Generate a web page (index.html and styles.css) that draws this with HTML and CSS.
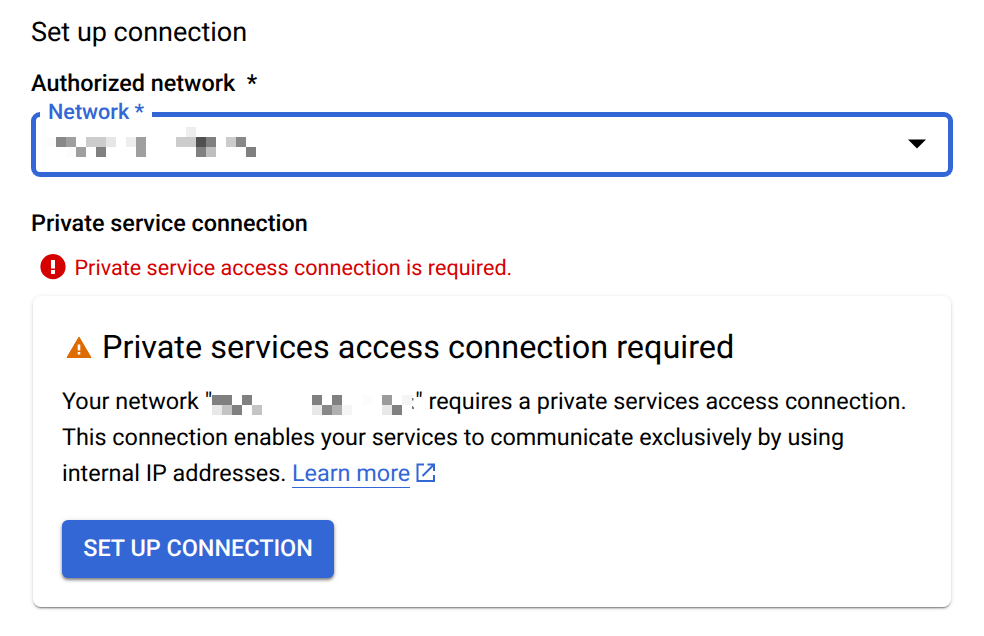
FILE: index.html
```html
<!DOCTYPE html>
<html lang="en">
<head>
<meta charset="utf-8">
<title>Set up connection</title>
<link rel="stylesheet" href="styles.css">
</head>
<body>
<main class="page">
  <h1 class="title"><span>Set up connection</span></h1>
  <h2 class="label label-network"><span>Authorized network&nbsp; *</span></h2>
  <div class="select">
    <span class="select-label"><span>Network *</span></span>
    <svg class="select-value" width="220" height="30" shape-rendering="crispEdges">
      <path fill="#eee" d="M140 0h10v10h-10zM80 10h10v10h-10z"/>
      <path fill="#fcfcfc" d="M0 10h10v10h-10zM20 20h10v10h-10z"/>
      <path fill="#888" d="M10 10h10v10h-10zM190 10h10v10h-10z"/>
      <path fill="#9f9f9f" d="M20 10h10v10h-10zM90 10h10v20h-10zM30 20h10v10h-10z"/>
      <path fill="#ccc" d="M40 10h20v10h-20zM130 10h20v10h-20zM180 10h10v10h-10z"/>
      <path fill="#e6e6e6" d="M60 10h10v10h-10z"/>
      <path fill="#505050" d="M150 10h10v10h-10z"/>
      <path fill="#808080" d="M160 10h10v10h-10zM50 20h10v10h-10zM150 20h10v10h-10zM200 20h10v10h-10z"/>
      <path fill="#bfbfbf" d="M160 20h10v10h-10z"/>
    </svg>
    <svg class="select-arrow" width="18" height="10" viewBox="0 0 18 10"><path d="M0 .5h18L9 9.500z"/></svg>
  </div>
  <h2 class="label label-private"><span>Private service connection</span></h2>
  <div class="error">
    <svg width="26" height="26" viewBox="0 0 26 26"><circle cx="13" cy="12.7" r="12.6" fill="#d50000"/><path fill="#fff" d="M11 6h4v8.500h-4zM11 16h4v4h-4z"/></svg>
    <span>Private service access connection is required.</span>
  </div>
  <section class="card">
    <h3 class="card-title">
      <svg width="26" height="23" viewBox="0 0 26 23"><path fill="#dd6b00" stroke="#dd6b00" stroke-linejoin="round" d="M13 1 25 21.500H1z"/><path fill="#fff" d="M11.700 8.500h2.600v6h-2.600zM11.700 16h2.600v2.600h-2.600z"/></svg>
      <span>Private services access connection required</span>
    </h3>
    <p class="text">
      <span class="line"><span>Your network "</span><svg class="masked" width="200" height="20" shape-rendering="crispEdges">
        <path fill="#808080" d="M0 0h20v10h-20zM30 0h10v10h-10zM100 0h10v10h-10zM120 0h10v10h-10zM20 10h10v10h-10zM180 10h10v10h-10z"/>
        <path fill="#e8e8e8" d="M0 10h10v10h-10zM100 10h10v10h-10zM170 10h10v10h-10z"/>
        <path fill="#c4c4c4" d="M10 10h10v10h-10zM40 10h10v10h-10z"/>
        <path fill="#888" d="M110 10h10v10h-10z"/>
        <path fill="#b0b0b0" d="M120 10h10v10h-10z"/>
        <path fill="#f5f5f5" d="M130 10h10v10h-10zM190 0h10v10h-10z"/>
        <path fill="#fcfcfc" d="M150 0h10v10h-10z"/>
        <path fill="#9b9b9b" d="M170 0h10v10h-10z"/>
      </svg><svg class="sliver" width="3" height="20"><path fill="#777" d="M0 3h1.500v2.500h-1.500zM0 11h1v1h1v2h-2z"/></svg><span>" requires a private services access connection.</span></span>
      <span class="line"><span>This connection enables your services to communicate exclusively by using</span></span>
      <span class="line"><span>internal IP addresses.</span><a class="link" href="#">Learn more</a><svg class="external" width="20" height="20" viewBox="0 0 20 20"><path fill="none" stroke="#3367d6" stroke-width="2" d="M8 1.500H1.500V18H18V12M11.500 1.500H18V8M18 1.500 6.500 13"/></svg></span>
    </p>
    <button class="button" type="button"><span>SET UP CONNECTION</span></button>
  </section>
</main>
</body>
</html>
```

FILE: styles.css
```css
* { box-sizing: border-box; }
body { margin: 0; background: #fff; color: #000; font-family: Roboto, sans-serif; text-rendering: geometricPrecision; }
.page { width: 984px; height: 636px; padding: 14px 31px 0; overflow: hidden; }
h1, h2, h3, p { margin: 0; white-space: nowrap; }
svg { display: block; flex: none; }
.title { font-size: 27px; font-weight: 400; line-height: 36px; }
.label { font-size: 23.4px; font-weight: 500; line-height: 30px; }
.label-network { margin-top: 18px; }
.select { position: relative; width: 922px; height: 65px; margin-top: 14px; padding: 10px 22px 0 10px; border: 5px solid #3367d6; border-radius: 9px; display: flex; justify-content: space-between; }
.select-label { position: absolute; left: 4px; top: -17px; width: 112px; padding-left: 8px; background: #fff; color: #3367d6; font-size: 21.6px; font-weight: 500; line-height: 26px; }
.select-arrow { margin-top: 12px; }
.label-private { margin-top: 31px; }
.error { display: flex; align-items: center; gap: 8.500px; height: 28px; margin: 15px 0 0 9px; color: #d50000; font-size: 21.6px; white-space: nowrap; }
.error span { padding-top: 2px; }
.card { width: 918px; height: 311px; margin: 15px 0 0 2px; padding: 31px 29px 0; border-radius: 8px; box-shadow: 0 2px 2px -1px rgba(0,0,0,.5), 0 1px 4px rgba(0,0,0,.14); }
.card-title { display: flex; align-items: center; gap: 10.500px; height: 40px; padding-left: 3.500px; font-size: 32.4px; font-weight: 400; }
.text { margin-top: 16px; font-size: 23.38px; }
.line { display: flex; align-items: center; height: 36px; }
.masked, .sliver { margin-top: 8px; }
.link { margin-left: 5.500px; height: 30px; line-height: 30px; border-bottom: 1px solid #3367d6; color: #3367d6; text-decoration: none; }
.external { margin-left: 5.500px; }
.button { display: block; width: 272px; height: 58px; margin-top: 29px; padding: 0 0 2px; border: 0; border-radius: 6px; background: #3367d6; color: #fff; box-shadow: 0 2px 3px rgba(0,0,0,.45), 0 1px 6px rgba(0,0,0,.12); font: 500 23.4px/54px Roboto, sans-serif; text-rendering: inherit; }
```
